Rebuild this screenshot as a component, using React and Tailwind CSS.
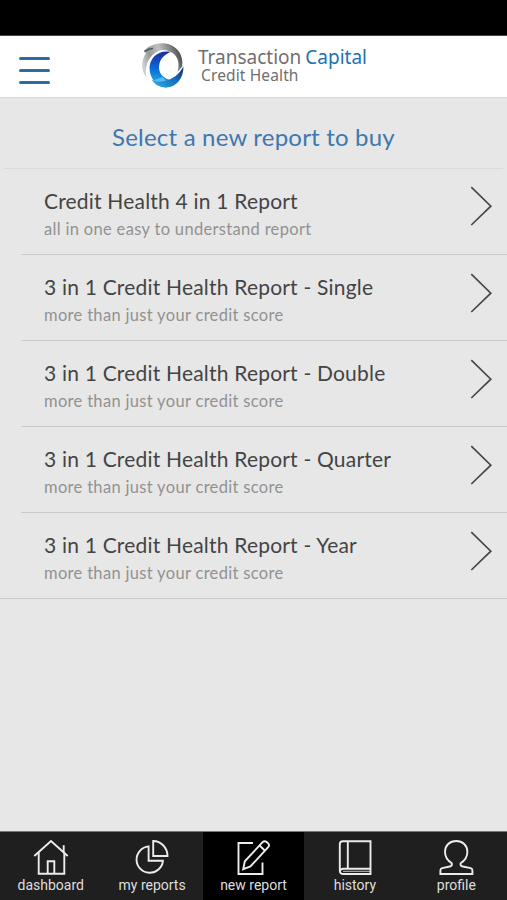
import React, { useState } from 'react';

const reports = [
  { title: 'Credit Health 4 in 1 Report', text: 'all in one easy to understand report' },
  { title: '3 in 1 Credit Health Report - Single', text: 'more than just your credit score' },
  { title: '3 in 1 Credit Health Report - Double', text: 'more than just your credit score' },
  { title: '3 in 1 Credit Health Report - Quarter', text: 'more than just your credit score' },
  { title: '3 in 1 Credit Health Report - Year', text: 'more than just your credit score' }
];

const tabs = [
  {
    label: 'dashboard',
    icon: (
      <>
        <path d="M1.3 17 18 2 34.7 17" />
        <path d="M30.7 13V6.2" />
        <path d="M5.7 13.5V34.8H31.3V13.5" />
        <path d="M14.7 34.8V22.3h6.6v12.5" />
      </>
    )
  },
  {
    label: 'my reports',
    icon: (
      <>
        <path d="M19.2 2v15h14.3A14.6 15 0 0 0 19.2 2Z" />
        <path d="M14.6 7.4v14.4h14.3A13.2 13.2 0 1 1 14.6 7.4Z" />
      </>
    )
  },
  {
    label: 'new report',
    icon: (
      <>
        <path d="M18 4H3.5v31h24V23.6" />
        <path d="M8.2 30.2 9.8 22.3 27.6 3.2Q29.4 1.2 31.6 3L33 4.2Q35 6.2 33.2 8.2L15.4 27.5Z" />
        <path d="M24.6 6.5 30 11.7" />
      </>
    )
  },
  {
    label: 'history',
    icon: (
      <>
        <path d="M33.5 2.3H5.8Q2.8 2.3 2.8 5.3V31.5Q2.8 35 6.3 35H33.5Z" />
        <path d="M10.8 2.3v27.4" />
        <path d="M33.5 29.7H6.3Q3 29.7 3 32.4" />
        <path d="M6 32.3H33" strokeWidth="0.8" />
      </>
    )
  },
  {
    label: 'profile',
    icon: (
      <path d="M13.8 24.3C9.4 21.5 7 17.4 7 12.8 7 6.4 11.8 2 18.2 2s11.2 4.4 11.2 10.8c0 4.6-2.4 8.7-6.8 11.5-.6 2.3.7 3 3.4 3.5l6.6 1.3c1.4.3 1.8 1.2 1.8 2.3V35H2.4v-3.6c0-1.1.4-2 1.8-2.3l6.4-1.3c2.500-.5 3.800-1.200 3.200-3.500Z" />
    )
  }
];

function Logo() {
  return (
    <svg className="h-[50px] w-[50px] shrink-0" viewBox="0 0 50 50">
      <defs>
        <linearGradient id="silver" x1="0" y1="0.6" x2="1" y2="0.3">
          <stop offset="0" stopColor="#d0d2d3" />
          <stop offset="0.25" stopColor="#96999a" />
          <stop offset="0.5" stopColor="#bfc1c2" />
          <stop offset="0.8" stopColor="#77797b" />
          <stop offset="1" stopColor="#3e4042" />
        </linearGradient>
        <linearGradient id="blue" x1="0.5" y1="0" x2="0.4" y2="1">
          <stop offset="0" stopColor="#1a2f9c" />
          <stop offset="0.45" stopColor="#0c62d0" />
          <stop offset="0.8" stopColor="#1c9be4" />
          <stop offset="1" stopColor="#1784cc" />
        </linearGradient>
        <linearGradient id="sweep" x1="0" y1="0.8" x2="1" y2="0">
          <stop offset="0" stopColor="#2aa6e6" />
          <stop offset="0.5" stopColor="#1673bd" />
          <stop offset="1" stopColor="#13276f" />
        </linearGradient>
      </defs>
      {/* silver ring */}
      <path d="M5.500 11.500C11 4.500 22 1.500 31 4.200c9.500 3.300 14.500 12 13.200 22.300L39.500 32c2.500-8 .5-15.500-5-19C27.500 8 19.500 9.500 14 15.500 8.500 21.500 7 29 8.500 37 2.500 31 3 20.500 8 13Z" fill="url(#silver)" />
      <path d="M6.500 11.500Q11 8.500 15 8.500" stroke="#55585a" strokeWidth="1.600" fill="none" />
      {/* blue swoosh */}
      <path d="M32.500 12C21.500 9.500 12 17 11.500 27.500 11.500 38.500 18.500 47 28.500 47.500L31 39.500C24.500 38 19.800 32 21.300 24.500 22.500 18.500 26.500 14.500 32.500 12Z" fill="url(#blue)" />
      <path d="M45.500 26.500C45.500 38.500 38.500 47 28.500 47.500 22 47.500 16.500 44.500 13.500 39.500 17 42 21.500 42.500 26 41 34.500 39.500 41 34.500 45.500 26.500Z" fill="url(#sweep)" />
      <path d="M15 40.500C19 42.300 24 42 28 40.500L24.500 37" fill="#7fd2f6" opacity=".6" />
    </svg>
  );
}

function Header() {
  return (
    <header className="flex h-[62px] shrink-0 items-start border-b border-[#d9d9d9] bg-white">
      <button className="mt-[21px] ml-[19px] flex w-[31px] flex-col gap-[9.500px]" aria-label="menu">
        <span className="h-[2.500px] w-full rounded-full bg-[#2b6ca6]" />
        <span className="h-[2.500px] w-full rounded-full bg-[#2b6ca6]" />
        <span className="h-[2.500px] w-full rounded-full bg-[#2b6ca6]" />
      </button>
      <div className="mt-[4px] ml-[88px]">
        <Logo />
      </div>
      <div className="mt-[11px] ml-[10px] font-['Noto_Sans','Open_Sans',sans-serif] whitespace-nowrap text-[#6f6f6f]">
        <p className="text-[19px] leading-[20px]">
          Transaction <span className="-ml-px text-[#2272b0]">Capital</span>
        </p>
        <p className="ml-[3px] text-[15.500px] leading-[17px] tracking-[0.13px]">Credit Health</p>
      </div>
    </header>
  );
}

function ReportRow({ report, first, last }) {
  return (
    <li>
      <button className="flex h-[85px] w-full items-start pl-[44px] text-left">
        <div className="min-w-0 flex-1 pt-[18px] whitespace-nowrap">
          <h2 className="text-[21px] leading-[27px] tracking-[0.2px] text-[#444]">{report.title}</h2>
          <p className="mt-[4px] text-[16.500px] leading-[22px] tracking-[0.32px] text-[#929292]">{report.text}</p>
        </div>
        <svg
          className={first ? 'mt-[17px] mr-[14px] h-[40px] w-[23px]' : 'mt-[18px] mr-[14px] h-[40px] w-[23px]'}
          viewBox="0 0 23 40"
          fill="none"
          stroke="#484848"
          strokeWidth="1.700"
        >
          <path d="M1.300 1.200 20.800 20.200 1.300 39" />
        </svg>
      </button>
      <div className={last ? 'h-px bg-[#cacaca]' : 'ml-[21px] h-px bg-[#cacaca]'} />
    </li>
  );
}

function App() {
  const [active, setActive] = useState('new report');

  return (
    <div className="flex h-screen w-full flex-col overflow-hidden bg-[#e7e7e7] font-[Lato,sans-serif]">
      <div className="h-[36px] shrink-0 border-b border-[#444] bg-black" />
      <Header />

      <main className="flex-1">
        <h1 className="h-[70px] pt-[23px] text-center text-[24px] leading-[32px] tracking-[0.2px] text-[#3d78ae]">
          Select a new report to buy
        </h1>
        <div className="mx-1 h-px bg-[#dadada]" />
        <ul>
          {reports.map((report, index) => (
            <ReportRow
              key={report.title}
              report={report}
              first={index === 0}
              last={index === reports.length - 1}
            />
          ))}
        </ul>
      </main>

      {/* Bottom navigation */}
      <nav className="grid h-[69px] shrink-0 grid-cols-5 border-t border-[#777] bg-[#1f1f1f]">
        {tabs.map((tab) => (
          <button
            key={tab.label}
            onClick={() => setActive(tab.label)}
            className={
              "flex flex-col items-center pt-[7px] font-[Roboto,sans-serif] text-[14px] leading-[18px] text-[#dedede] " +
              (active === tab.label ? 'bg-black' : '')
            }
          >
            <svg
              className="h-[36px] w-[36px]"
              viewBox="0 0 36 36"
              fill="none"
              stroke="#ececec"
              strokeWidth="1.900"
            >
              {tab.icon}
            </svg>
            <span className="mt-px whitespace-nowrap">{tab.label}</span>
          </button>
        ))}
      </nav>
    </div>
  );
}

export default App;
